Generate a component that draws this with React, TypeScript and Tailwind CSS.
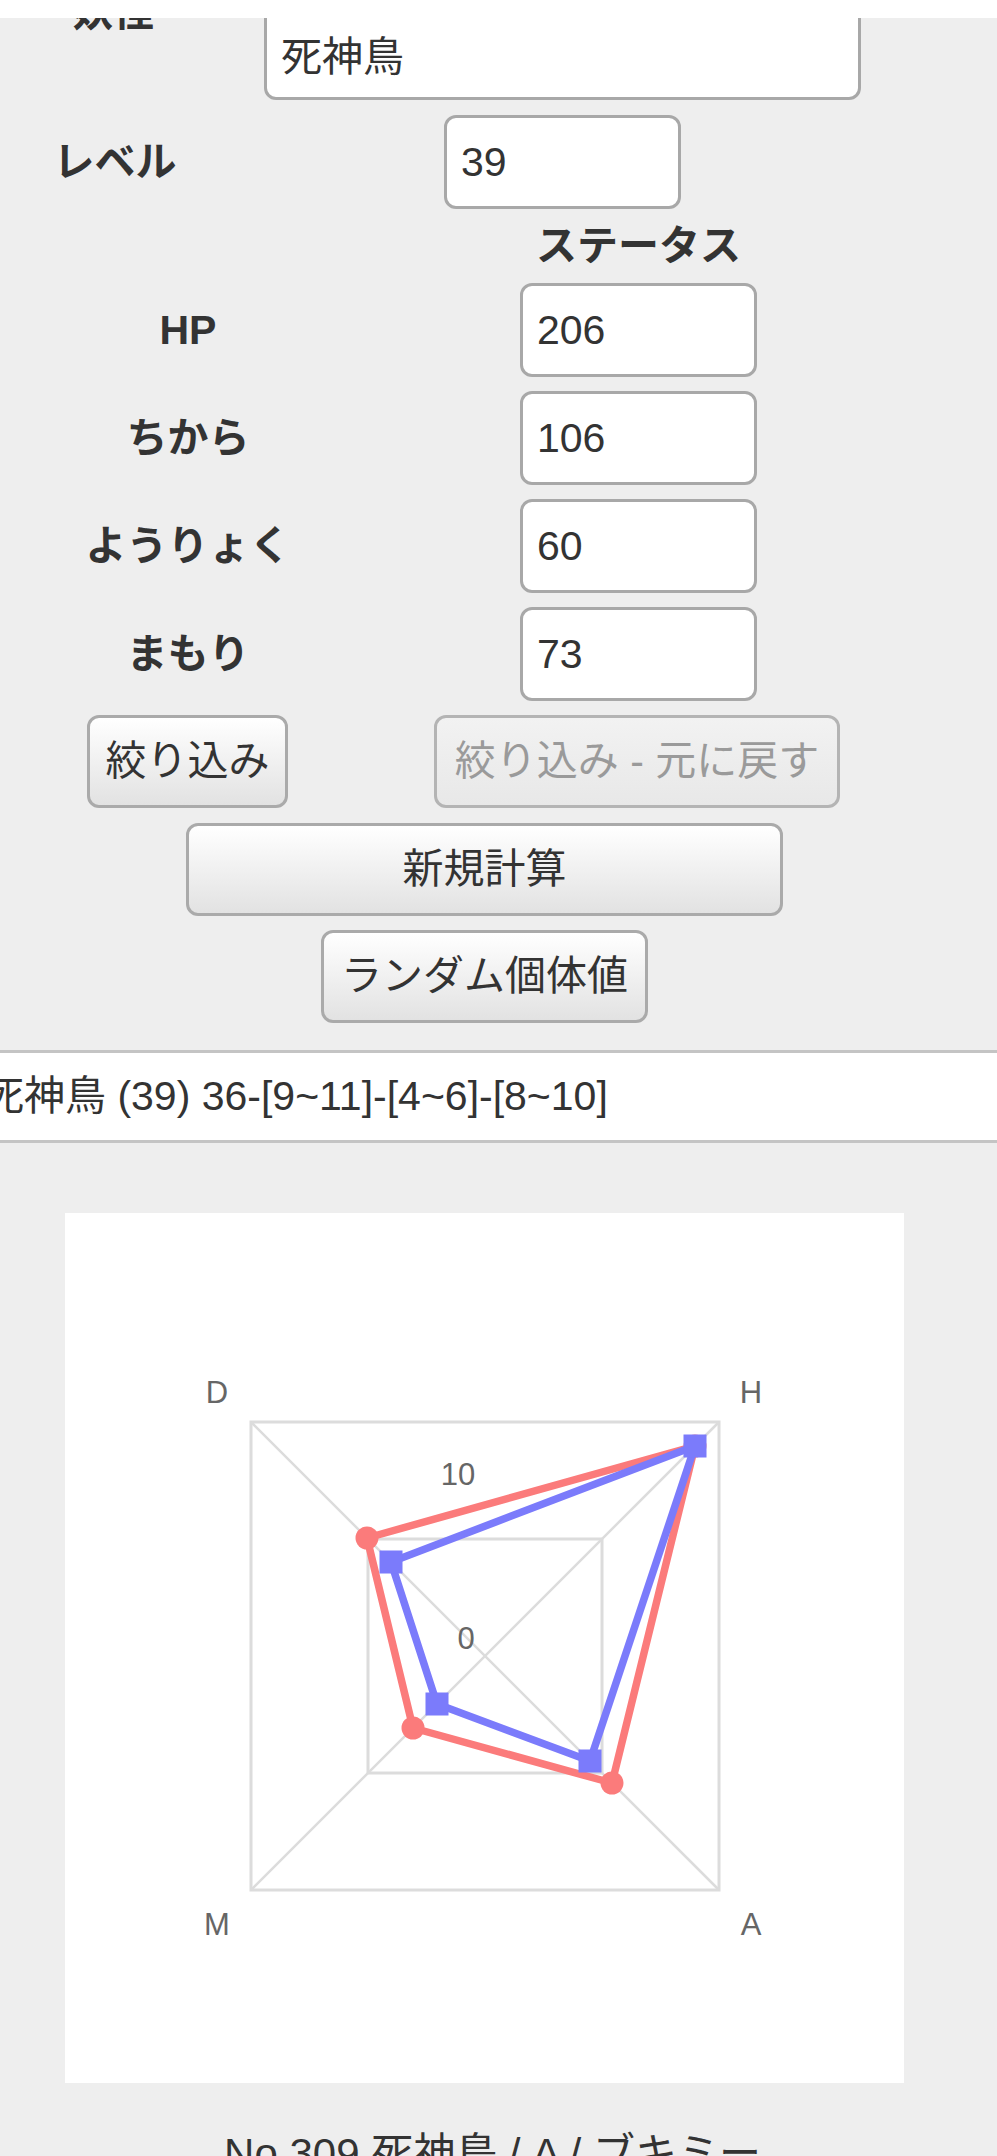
import React from 'react';

const stats = [
  { label: 'HP', value: '206' },
  { label: 'ちから', value: '106' },
  { label: 'ようりょく', value: '60' },
  { label: 'まもり', value: '73' },
];

// radar chart, coordinates in the white card
const cx = 420;
const cy = 443;
const red = [
  [630, 233],
  [547, 570],
  [348, 515],
  [302, 325],
];
const blue = [
  [630, 233],
  [525, 548],
  [372, 491],
  [326, 349],
];

function Field({ value, className }: { value: string; className: string }) {
  return (
    <input
      readOnly
      defaultValue={value}
      className={`h-[94px] rounded-[12px] border-[3px] border-[#a8a8a8] bg-white px-[14px] text-[41px] text-[#333] outline-none ${className}`}
    />
  );
}

function Btn({ label, className }: { label: string; className: string }) {
  return (
    <button
      className={`h-[93px] rounded-[12px] border-[3px] border-[#aaa] bg-linear-to-b from-white to-[#e2e2e2] text-[41px] text-[#333] ${className}`}
    >
      {label}
    </button>
  );
}

function Radar() {
  const pts = (list: number[][]) => list.map((p) => p.join(',')).join(' ');
  return (
    <svg width="839" height="870" viewBox="0 0 839 870">
      <g stroke="#dcdcdc" fill="none">
        <rect x="186" y="209" width="468" height="468" strokeWidth="3" />
        <rect x="303" y="326" width="234" height="234" strokeWidth="3" />
        <line x1="186" y1="209" x2="654" y2="677" strokeWidth="2.5" />
        <line x1="654" y1="209" x2="186" y2="677" strokeWidth="2.5" />
      </g>
      <g fill="#666" fontSize="31" textAnchor="middle" dominantBaseline="central">
        <text x="152" y="179">D</text>
        <text x="686" y="179">H</text>
        <text x="152" y="711">M</text>
        <text x="686" y="711">A</text>
        <text x="393" y="261">10</text>
        <text x="401" y="425">0</text>
      </g>
      <polygon points={pts(red)} fill="none" stroke="#fb7b7b" strokeWidth="7.5" strokeLinejoin="round" />
      {red.map(([x, y], i) => (
        <circle key={i} cx={x} cy={y} r="11.5" fill="#fb7b7b" />
      ))}
      <polygon points={pts(blue)} fill="none" stroke="#7b7bfb" strokeWidth="7.5" strokeLinejoin="round" />
      {blue.map(([x, y], i) => (
        <rect key={i} x={x - 11.5} y={y - 11.5} width="23" height="23" fill="#7b7bfb" />
      ))}
    </svg>
  );
}

export default function App() {
  return (
    <div className="min-h-[2156px] overflow-hidden bg-[#eeeeee] font-['Liberation_Sans','Noto_Sans_CJK_JP',sans-serif] text-[#333]">
      <div className="h-[18px] bg-white" />

      {/* 妖怪 row, scrolled half under the header */}
      <div className="h-[82px] overflow-hidden">
        <div className="-mt-[12px] flex h-[94px] items-start">
          <div className="-mt-[18px] w-[226px] text-center text-[41px] leading-[49px] font-bold">妖怪</div>
          <Field value="死神鳥" className="ml-[38px] w-[597px]" />
        </div>
      </div>

      <div className="mt-[15px] flex h-[94px] items-center">
        <div className="w-[230px] text-center text-[41px] leading-[49px] font-bold">レベル</div>
        <Field value="39" className="ml-[214px] w-[237px]" />
      </div>

      <div className="mt-[13px] ml-[520px] h-[49px] w-[237px] text-center text-[41px] leading-[49px] font-bold">
        ステータス
      </div>

      <div className="mt-[12px] flex flex-col gap-[14px]">
        {stats.map((s) => (
          <div key={s.label} className="flex h-[94px] items-center">
            <div className="w-[376px] text-center text-[41px] leading-[49px] font-bold">{s.label}</div>
            <Field value={s.value} className="ml-[144px] w-[237px]" />
          </div>
        ))}
      </div>

      <div className="mt-[14px] flex">
        <Btn label="絞り込み" className="ml-[87px] w-[201px]" />
        <button
          disabled
          className="ml-[146px] h-[93px] w-[406px] rounded-[12px] border-[3px] border-[#b4b4b4] bg-linear-to-b from-[#f2f2f2] to-[#e8e8e8] text-[41px] text-[#9a9a9a]"
        >
          絞り込み - 元に戻す
        </button>
      </div>
      <div className="mt-[15px] flex">
        <Btn label="新規計算" className="ml-[186px] w-[597px]" />
      </div>
      <div className="mt-[14px] flex">
        <Btn label="ランダム個体値" className="ml-[321px] w-[327px]" />
      </div>

      <div className="mt-[27px] flex h-[93px] items-center border-y-[3px] border-[#c4c4c4] bg-white">
        <span className="-ml-[17px] text-[41px] whitespace-nowrap">死神鳥 (39) 36-[9~11]-[4~6]-[8~10]</span>
      </div>

      <div className="mt-[70px] ml-[65px] h-[870px] w-[839px] bg-white">
        <Radar />
      </div>

      <div className="mt-[46px] w-[985px] text-center text-[42px] leading-[50px] whitespace-nowrap">
        No.309 死神鳥 / A / ブキミー
      </div>
    </div>
  );
}
